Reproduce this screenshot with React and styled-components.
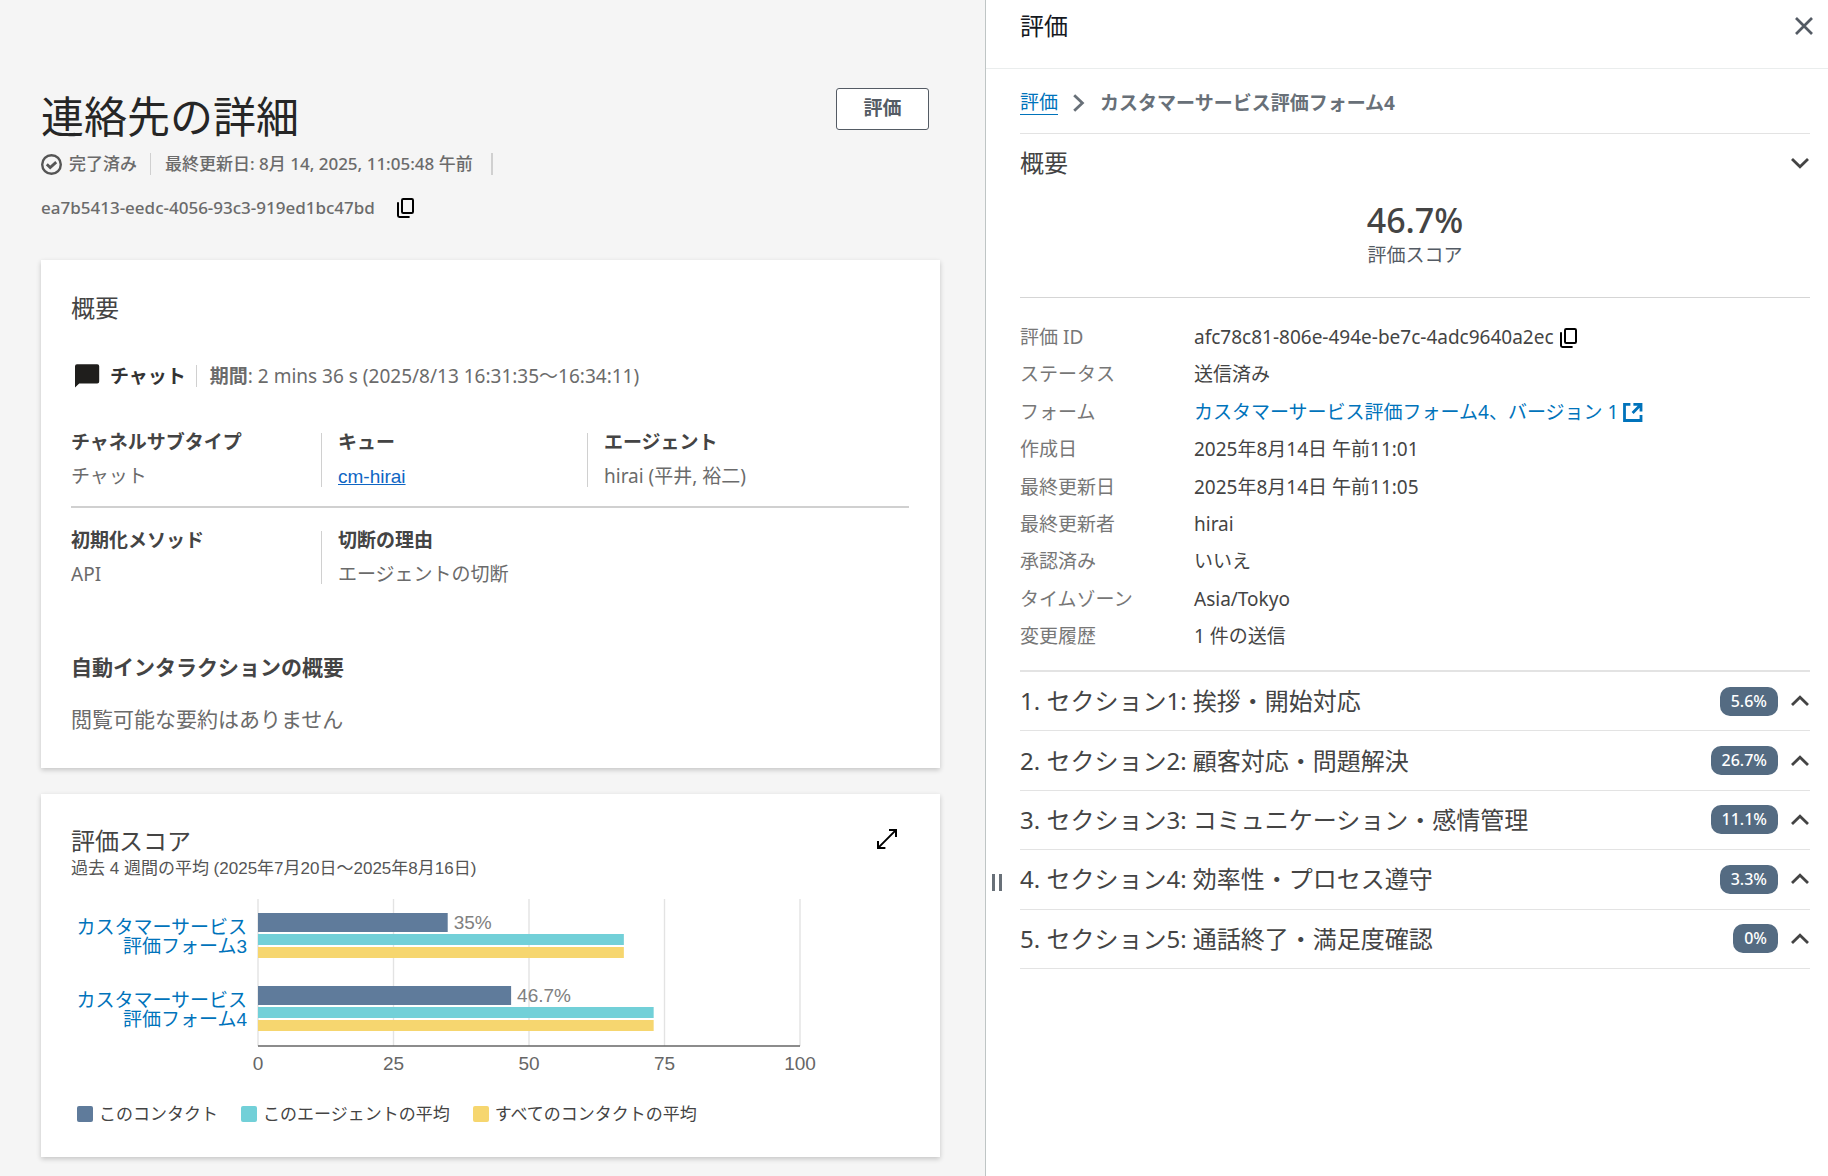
import React from 'react';
import styled, { createGlobalStyle } from 'styled-components';

const sans = '"Noto Sans", "Noto Sans CJK JP", sans-serif';
const helvetica = '"Liberation Sans", "Noto Sans CJK JP", sans-serif';

const GlobalStyle = createGlobalStyle`
  *, *::before, *::after { box-sizing: border-box; }
  body { margin: 0; background: #fff; color: #444; font-family: ${sans}; font-size: 19px; line-height: 24px; }
  h1, h2, h3, p, dl, dd, dt, ol { margin: 0; padding: 0; font-weight: 400; }
  button { font: inherit; cursor: pointer; }
  svg { display: block; flex: none; }
`;

/* ---------- layout ---------- */

const Page = styled.div`
  display: grid;
  grid-template-columns: minmax(0, 985fr) minmax(0, 843fr);
  min-height: 100vh;
`;

const ContactPane = styled.main`
  background: #f5f5f5;
  padding: 88px 45px 20px 41px;
`;

const IconButton = styled.button`
  display: inline-flex;
  padding: 0;
  border: 0;
  background: none;
  color: ${(p) => p.$color || '#000'};
`;

/* ---------- contact header ---------- */

const ContactHeader = styled.header`
  display: flex;
  justify-content: space-between;
  align-items: flex-start;
  padding-right: 11px;
  margin-bottom: 40px;
`;

const PageTitle = styled.h1`
  font-size: 43px;
  line-height: 58px;
  color: #262626;
`;

const MetaRow = styled.div`
  display: flex;
  align-items: center;
  height: 22px;
  margin-top: 7px;
  font-size: 17px;
  font-weight: 500;
  color: #6b6b6b;
`;

const Status = styled.span`
  display: flex;
  align-items: center;
  gap: 7px;
`;

const Updated = styled.span`
  height: 22px;
  line-height: 22px;
  margin-left: 13px;
  padding: 0 18px 0 14px;
  border-left: 1px solid #d0d0d0;
  border-right: 2px solid #d0d0d0;
`;

const IdRow = styled.div`
  display: flex;
  align-items: center;
  gap: 22px;
  height: 24px;
  margin-top: 21px;
  font-size: 17px;
  font-weight: 500;
  color: #6b6b6b;
`;

const EvaluateButton = styled.button`
  width: 93px;
  height: 42px;
  padding: 0 0 2px;
  border: 1px solid #545b64;
  border-radius: 3px;
  background: #fff;
  color: #545b64;
  font-weight: 700;
`;

/* ---------- cards ---------- */

const Card = styled.section`
  background: #fff;
  box-shadow: 0 2px 5px rgba(0, 0, 0, 0.2);
  padding: 30px 31px 35px 30px;
  & + & { margin-top: 26px; padding-bottom: 31px; }
`;

const CardTitle = styled.h2`
  font-size: 24px;
  line-height: 36px;
  color: #444;
`;

const ChannelRow = styled.div`
  display: flex;
  align-items: center;
  height: 24px;
  margin: 38px 0 45px;
`;

const Channel = styled.strong`
  margin-left: 7px;
  color: #333;
`;

const Duration = styled.span`
  line-height: 22px;
  margin-left: 10px;
  padding-left: 13px;
  border-left: 1px solid #d0d0d0;
  color: #6b6b6b;
`;

const FactRow = styled.dl`
  display: grid;
  grid-template-columns: 250px 266px minmax(0, 1fr);
  & + & { margin-top: 19px; padding-top: 23px; border-top: 2px solid #d0d0d0; }
`;

const Fact = styled.div`
  & + & { padding-left: 16px; border-left: ${(p) => p.$rule || 2}px solid #d0d0d0; }
`;

const FactLabel = styled.dt`
  line-height: 18px;
  font-weight: 700 !important;
  color: #444;
`;

const FactValue = styled.dd`
  margin-top: 15px !important;
  line-height: 20px;
  color: #6b6b6b;
`;

const QueueLink = styled.a`
  font-family: ${helvetica};
  color: #0f66c4;
`;

const SummaryTitle = styled.h3`
  margin-top: 69px;
  font-size: 21px;
  line-height: 28px;
  font-weight: 700;
`;

const SummaryText = styled.p`
  margin-top: 24px;
  font-size: 21px;
  line-height: 28px;
  color: #6b6b6b;
`;

/* ---------- score chart ---------- */

const ScoreHeader = styled.header`
  display: flex;
  justify-content: space-between;
  align-items: flex-start;
  padding: 0 12px 0 0;
`;

const ScoreTitle = styled(CardTitle)`
  line-height: 34px;
`;

const ScoreRange = styled.p`
  font-family: ${helvetica};
  font-size: 17px;
  line-height: 22px;
  color: #555;
`;

const ExpandButton = styled(IconButton)`
  margin-top: 5px;
`;

const ChartSvg = styled.svg`
  margin-top: 11px;
  max-width: 100%;
  font-family: ${helvetica};
  font-size: 19px;
`;

const Legend = styled.ul`
  display: flex;
  gap: 23px;
  margin: 26px 0 0;
  padding: 0 0 0 6px;
  list-style: none;
  font-size: 17px;
`;

const LegendItem = styled.li`
  display: flex;
  align-items: center;
  gap: 6px;
`;

const Swatch = styled.span`
  width: 16px;
  height: 16px;
  border-radius: 2px;
  background: ${(p) => p.$color};
`;

/* ---------- evaluation panel ---------- */

const Panel = styled.aside`
  position: relative;
  border-left: 1px solid #bfc5c5;
  background: #fff;
`;

const ResizeHandle = styled.button`
  position: absolute;
  left: 6px;
  top: 75%;
  width: 10px;
  height: 17px;
  margin-top: -9px;
  padding: 0;
  border: solid #687078;
  border-width: 0 3px;
  background: none;
  cursor: col-resize;
`;

const PanelHeader = styled.header`
  display: flex;
  justify-content: space-between;
  align-items: center;
  padding: 8px 15px 24px 34px;
  border-bottom: 1px solid #eaeded;
`;

const PanelTitle = styled.h2`
  font-size: 24px;
  line-height: 36px;
  color: #16191f;
`;

const PanelBody = styled.div`
  padding: 0 18px 0 34px;
`;

const Breadcrumb = styled.nav`
  display: flex;
  align-items: center;
  gap: 15px;
  height: 65px;
  padding-top: 3px;
  border-bottom: 1px solid #e3e3e3;
  color: #687078;
`;

const CrumbLink = styled.a`
  color: #0073bb;
  text-decoration: none;
  border-bottom: 1px solid #0073bb;
`;

const CrumbCurrent = styled.strong`
  font-weight: 700;
`;

const SummaryToggle = styled.button`
  display: flex;
  justify-content: space-between;
  align-items: center;
  width: 100%;
  height: 58px;
  padding: 0 1px 0 0;
  border: 0;
  background: none;
  color: #444;
  font-size: 24px;
`;

const Score = styled.div`
  padding: 6px 0 29px;
  border-bottom: 1px solid #d5d5d5;
  text-align: center;
`;

const ScoreNumber = styled.p`
  font-size: 34px;
  line-height: 44px;
  font-weight: 500;
`;

const ScoreCaption = styled.p`
  line-height: 26px;
  color: #545b64;
`;

const Details = styled.dl`
  display: grid;
  grid-template-columns: 174px minmax(0, 1fr);
  align-content: space-between;
  min-height: 336px;
  margin: 21px 0 15px;
  line-height: 37px;
`;

const DetailLabel = styled.dt`
  color: #777;
`;

const DetailValue = styled.dd`
  display: flex;
  align-items: center;
  gap: ${(p) => p.$gap || 0}px;
`;

const FormLink = styled.a`
  display: flex;
  align-items: center;
  gap: 5px;
  color: #0073bb;
  text-decoration: none;
`;

const SectionList = styled.ol`
  display: grid;
  grid-auto-rows: 1fr;
  min-height: 299px;
  list-style: none;
  border-top: 2px solid #e3e3e3;
`;

const SectionToggle = styled.button`
  display: flex;
  align-items: center;
  width: 100%;
  height: 100%;
  padding: 0 1px 0 0;
  border: 0;
  border-bottom: 1px solid #e3e3e3;
  background: none;
  color: #444;
  text-align: left;
`;

const SectionName = styled.span`
  flex: 1;
  font-size: 24px;
`;

const Badge = styled.span`
  margin-right: 13px;
  padding: 0 11px;
  border-radius: 10px;
  background: #546b82;
  color: #fff;
  font-size: 16px;
  font-weight: 500;
  line-height: 29px;
`;

/* ---------- icons ---------- */

const CheckCircle = () => (
  <svg width="21" height="21" viewBox="0 0 21 21" fill="none" stroke="#555">
    <circle cx="10.5" cy="10.5" r="9.3" strokeWidth="2.4" />
    <path d="M5.8 10.2l3.4 3.3 6-5.4" strokeWidth="2.8" />
  </svg>
);

const CopyIcon = () => (
  <svg width="17" height="20" viewBox="0 0 17 20" fill="none" stroke="#000" strokeWidth="2">
    <rect x="5" y="1" width="11" height="14" rx="1.2" />
    <path d="M1 4.2V17.6Q1 19 2.4 19H12.6" />
  </svg>
);

const ChatIcon = () => (
  <svg width="32" height="26" viewBox="0 0 32 26">
    <path d="M4 24.5V3.2Q4 1.2 6 1.2H26.2Q28.2 1.2 28.2 3.2V18.4Q28.2 20.4 26.2 20.4H8.2Z" fill="#1f1e1c" />
  </svg>
);

const ExpandIcon = () => (
  <svg width="20" height="20" viewBox="0 0 20 20" fill="none" stroke="currentColor" strokeWidth="2">
    <path d="M1.4 18.6L18.6 1.4M12 1H19V8M1 12V19H8.4" />
  </svg>
);

const CloseIcon = () => (
  <svg width="18" height="18" viewBox="0 0 18 18" fill="none" stroke="currentColor" strokeWidth="2.7">
    <path d="M1 1l16 16M17 1L1 17" />
  </svg>
);

const CrumbChevron = () => (
  <svg width="12" height="18" viewBox="0 0 12 18" fill="none" stroke="currentColor" strokeWidth="2.8">
    <path d="M1.2 1.2L9.4 9l-8.2 7.8" />
  </svg>
);

const Chevron = ({ up }) => (
  <svg width="18" height="12" viewBox="0 0 18 12" fill="none" stroke="#444" strokeWidth="2.8">
    <path d={up ? 'M1 10l8-7.8 8 7.8' : 'M1 2l8 7.8L17 2'} />
  </svg>
);

const ExternalIcon = () => (
  <svg width="20" height="19" viewBox="0 0 20 19" fill="none" stroke="#0073bb" strokeWidth="2.8">
    <path d="M7.4 1.4H1.5V17.5H18V12M10.4 1.4H18V8.6M17.6 1.8L9.6 10" />
  </svg>
);

/* ---------- data ---------- */

const series = [
  { name: 'このコンタクト', color: '#5f7b9b' },
  { name: 'このエージェントの平均', color: '#72d0d8' },
  { name: 'すべてのコンタクトの平均', color: '#f6d66f' },
];

const forms = [
  { lines: ['カスタマーサービス', '評価フォーム3'], values: [35, 67.5, 67.5] },
  { lines: ['カスタマーサービス', '評価フォーム4'], values: [46.7, 73, 73] },
];

const sections = [
  ['1. セクション1: 挨拶・開始対応', '5.6%'],
  ['2. セクション2: 顧客対応・問題解決', '26.7%'],
  ['3. セクション3: コミュニケーション・感情管理', '11.1%'],
  ['4. セクション4: 効率性・プロセス遵守', '3.3%'],
  ['5. セクション5: 通話終了・満足度確認', '0%'],
];

const plot = { left: 187, width: 542, top: 8, bottom: 155, band: 73 };
const barSlots = [
  { y: 22, h: 19 },
  { y: 43, h: 11 },
  { y: 56, h: 11 },
];

const ScoreChart = () => {
  const x = (v) => plot.left + (v / 100) * plot.width;
  const ticks = [0, 25, 50, 75, 100];
  return (
    <ChartSvg width="760" height="185" viewBox="0 0 760 185" role="img" aria-label="評価スコア">
      {ticks.map((t) => (
        <line key={t} x1={x(t)} x2={x(t)} y1={plot.top} y2={plot.bottom} stroke="#e3e3e3" strokeWidth="1.4" />
      ))}
      {forms.map((form, i) => {
        const top = i * plot.band;
        return (
          <g key={form.lines[1]}>
            <a href="#form">
              {form.lines.map((line, n) => (
                <text key={line} x="176" y={top + 43 + n * 19} textAnchor="end" fill="#0073bb">{line}</text>
              ))}
            </a>
            {form.values.map((v, n) => (
              <rect key={n} x={plot.left} y={top + barSlots[n].y} width={x(v) - plot.left} height={barSlots[n].h} fill={series[n].color} />
            ))}
            <text x={x(form.values[0]) + 6} y={top + 38} fill="#808080">{form.values[0]}%</text>
          </g>
        );
      })}
      <line x1={plot.left} x2={x(100)} y1={plot.bottom} y2={plot.bottom} stroke="#666" strokeWidth="1.4" />
      {ticks.map((t) => (
        <text key={t} x={x(t)} y="179" textAnchor="middle" fill="#666">{t}</text>
      ))}
    </ChartSvg>
  );
};

export default function App() {
  return (
    <>
      <GlobalStyle />
      <Page>
        <ContactPane>
          <ContactHeader>
            <div>
              <PageTitle>連絡先の詳細</PageTitle>
              <MetaRow>
                <Status><CheckCircle />完了済み</Status>
                <Updated>最終更新日: 8月 14, 2025, 11:05:48 午前</Updated>
              </MetaRow>
              <IdRow>
                ea7b5413-eedc-4056-93c3-919ed1bc47bd
                <IconButton aria-label="コピー"><CopyIcon /></IconButton>
              </IdRow>
            </div>
            <EvaluateButton>評価</EvaluateButton>
          </ContactHeader>

          <Card>
            <CardTitle>概要</CardTitle>
            <ChannelRow>
              <ChatIcon />
              <Channel>チャット</Channel>
              <Duration><b>期間</b>: 2 mins 36 s (2025/8/13 16:31:35〜16:34:11)</Duration>
            </ChannelRow>
            <FactRow>
              <Fact>
                <FactLabel>チャネルサブタイプ</FactLabel>
                <FactValue>チャット</FactValue>
              </Fact>
              <Fact>
                <FactLabel>キュー</FactLabel>
                <FactValue><QueueLink href="#queue">cm-hirai</QueueLink></FactValue>
              </Fact>
              <Fact $rule={1}>
                <FactLabel>エージェント</FactLabel>
                <FactValue>hirai (平井, 裕二)</FactValue>
              </Fact>
            </FactRow>
            <FactRow>
              <Fact>
                <FactLabel>初期化メソッド</FactLabel>
                <FactValue>API</FactValue>
              </Fact>
              <Fact>
                <FactLabel>切断の理由</FactLabel>
                <FactValue>エージェントの切断</FactValue>
              </Fact>
            </FactRow>
            <SummaryTitle>自動インタラクションの概要</SummaryTitle>
            <SummaryText>閲覧可能な要約はありません</SummaryText>
          </Card>

          <Card>
            <ScoreHeader>
              <div>
                <ScoreTitle>評価スコア</ScoreTitle>
                <ScoreRange>過去 4 週間の平均 (2025年7月20日〜2025年8月16日)</ScoreRange>
              </div>
              <ExpandButton aria-label="拡大"><ExpandIcon /></ExpandButton>
            </ScoreHeader>
            <ScoreChart />
            <Legend>
              {series.map((s) => (
                <LegendItem key={s.name}><Swatch $color={s.color} />{s.name}</LegendItem>
              ))}
            </Legend>
          </Card>
        </ContactPane>

        <Panel>
          <PanelHeader>
            <PanelTitle>評価</PanelTitle>
            <IconButton $color="#545b64" aria-label="閉じる"><CloseIcon /></IconButton>
          </PanelHeader>
          <PanelBody>
            <Breadcrumb>
              <CrumbLink href="#evaluations">評価</CrumbLink>
              <CrumbChevron />
              <CrumbCurrent>カスタマーサービス評価フォーム4</CrumbCurrent>
            </Breadcrumb>
            <SummaryToggle aria-expanded="true">概要<Chevron /></SummaryToggle>
            <Score>
              <ScoreNumber>46.7%</ScoreNumber>
              <ScoreCaption>評価スコア</ScoreCaption>
            </Score>
            <Details>
              <DetailLabel>評価 ID</DetailLabel>
              <DetailValue $gap={6}>
                afc78c81-806e-494e-be7c-4adc9640a2ec
                <IconButton aria-label="コピー"><CopyIcon /></IconButton>
              </DetailValue>
              <DetailLabel>ステータス</DetailLabel>
              <DetailValue>送信済み</DetailValue>
              <DetailLabel>フォーム</DetailLabel>
              <DetailValue>
                <FormLink href="#form-version">カスタマーサービス評価フォーム4、バージョン 1<ExternalIcon /></FormLink>
              </DetailValue>
              <DetailLabel>作成日</DetailLabel>
              <DetailValue>2025年8月14日 午前11:01</DetailValue>
              <DetailLabel>最終更新日</DetailLabel>
              <DetailValue>2025年8月14日 午前11:05</DetailValue>
              <DetailLabel>最終更新者</DetailLabel>
              <DetailValue>hirai</DetailValue>
              <DetailLabel>承認済み</DetailLabel>
              <DetailValue>いいえ</DetailValue>
              <DetailLabel>タイムゾーン</DetailLabel>
              <DetailValue>Asia/Tokyo</DetailValue>
              <DetailLabel>変更履歴</DetailLabel>
              <DetailValue>1 件の送信</DetailValue>
            </Details>
            <SectionList>
              {sections.map(([name, score]) => (
                <li key={name}>
                  <SectionToggle aria-expanded="false">
                    <SectionName>{name}</SectionName>
                    <Badge>{score}</Badge>
                    <Chevron up />
                  </SectionToggle>
                </li>
              ))}
            </SectionList>
          </PanelBody>
          <ResizeHandle aria-label="パネルのサイズ変更" />
        </Panel>
      </Page>
    </>
  );
}
